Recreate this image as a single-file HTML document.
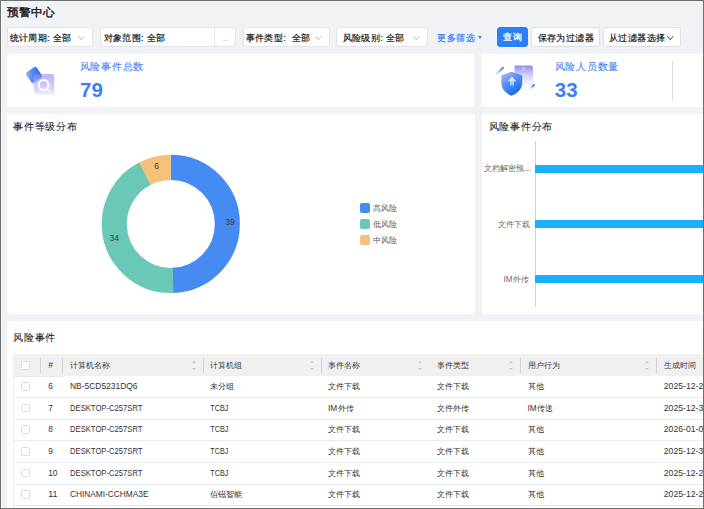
<!DOCTYPE html>
<html><head><meta charset="utf-8"><style>
*{box-sizing:border-box;margin:0;padding:0}
html,body{width:704px;height:509px;overflow:hidden;background:#f0f2f6}
body{font-family:"Liberation Sans",sans-serif;color:#333;position:relative}
.frame{position:absolute;left:0;top:0;width:704px;height:509px;border:1px solid #707070;z-index:50;box-shadow:inset 1px 0 0 #f8f9fc}
.a{position:absolute;white-space:nowrap}
.title{font-size:12px;font-weight:400;-webkit-text-stroke:0.45px #1f1f1f;color:#1f1f1f;line-height:14px;transform:scaleY(0.94);transform-origin:0 0}
.box{position:absolute;background:#fff;border:1px solid #e0e3e9;border-radius:3px}
.ft{position:absolute;font-size:9px;line-height:12px;color:#1a1a1a;letter-spacing:0.35px;-webkit-text-stroke:0.2px currentColor}
.chev{position:absolute;width:4.6px;height:4.6px;border-right:1px solid #c2c5cc;border-bottom:1px solid #c2c5cc;transform:rotate(45deg)}
.card{position:absolute;background:#fff;border-radius:3px}
.stitle{font-size:10px;color:#4d85f6;line-height:13px;letter-spacing:0.75px;-webkit-text-stroke:0.12px currentColor}
.num{font-size:20.5px;font-weight:bold;color:#3e7ff6;line-height:20px}
.ctitle{font-size:10px;color:#1c1c1c;line-height:13px;letter-spacing:0.75px;-webkit-text-stroke:0.1px currentColor}
.leg{position:absolute;left:359.6px;width:10.2px;height:9.6px;border-radius:2px}
.legt{position:absolute;left:372.5px;font-size:8.3px;color:#5a5a5a;line-height:10px}
.blab{position:absolute;font-size:8.3px;color:#6a6a6a;line-height:10px}
.bar{position:absolute;left:535px;width:170px;height:8px;background:#19b1fb}
.cb{width:8.6px;height:8.6px;border:1px solid #d9dce3;border-radius:1.5px;background:#fff}
.sorti{width:4px;height:10px}
.sorti:before{content:"";position:absolute;left:0;top:0;border-left:2px solid transparent;border-right:2px solid transparent;border-bottom:2.2px solid #c3c6cc}
.sorti:after{content:"";position:absolute;left:0;top:7.5px;border-left:2px solid transparent;border-right:2px solid transparent;border-top:2.2px solid #c3c6cc}
</style></head><body>
<div class="frame"></div>
<div class="a title" style="left:7px;top:6.3px">预警中心</div>
<div class="box" style="left:7px;top:27px;width:86px;height:20px"></div>
<div class="a ft" style="left:9.5px;top:31.5px">统计周期: 全部</div>
<i class="chev" style="left:79.3px;top:33.8px"></i>
<div class="box" style="left:100px;top:27px;width:136px;height:20px"></div>
<div class="a" style="left:214px;top:28px;width:1px;height:18px;background:#e3e6ec"></div>
<div class="a ft" style="left:103.5px;top:31.5px">对象范围: 全部</div>
<div class="a" style="left:221.5px;top:32.5px;font-size:8px;color:#a8a8a8;line-height:12px">...</div>
<div class="box" style="left:243px;top:27px;width:87px;height:20px"></div>
<div class="a ft" style="left:245.8px;top:31.5px">事件类型:&nbsp; 全部</div>
<i class="chev" style="left:316px;top:33.8px"></i>
<div class="box" style="left:336px;top:27px;width:92px;height:20px"></div>
<div class="a ft" style="left:342.8px;top:31.5px">风险级别: 全部</div>
<i class="chev" style="left:414px;top:33.8px"></i>
<div class="a ft" style="left:437.3px;top:31.5px;color:#3a7ef2;letter-spacing:0.6px">更多筛选</div>
<div class="a" style="left:477.5px;top:36px;width:0;height:0;border-left:2.2px solid transparent;border-right:2.2px solid transparent;border-top:3px solid #3a7ef2"></div>
<div class="box" style="left:497px;top:27px;width:31px;height:20px;background:#2a7ff6;border-color:#2a7ff6"></div>
<div class="a ft" style="left:503px;top:30.5px;color:#fff;letter-spacing:0.6px;-webkit-text-stroke:0.35px #fff">查询</div>
<div class="box" style="left:531px;top:27px;width:69px;height:20px;border-color:#dcdfe6"></div>
<div class="a ft" style="left:537.8px;top:31.5px">保存为过滤器</div>
<div class="box" style="left:603px;top:27px;width:78px;height:20px;border-color:#dcdfe6"></div>
<div class="a ft" style="left:608.8px;top:31.5px;letter-spacing:0.5px">从过滤器选择</div>
<i class="chev" style="left:667.5px;top:33.6px;border-color:#555"></i>
<div class="card" style="left:7px;top:54px;width:467px;height:53px"></div>
<div class="card" style="left:480.8px;top:54px;width:240px;height:53px"></div>
<svg class="a" style="left:0;top:0" width="704" height="120" viewBox="0 0 704 120">
  <defs>
    <linearGradient id="g1" x1="0" y1="0" x2="1" y2="0.6">
      <stop offset="0" stop-color="#a5b2f8"/><stop offset="0.55" stop-color="#4a86f7"/><stop offset="1" stop-color="#2a6cf5"/>
    </linearGradient>
    <linearGradient id="g2" x1="0" y1="0" x2="0" y2="1">
      <stop offset="0" stop-color="#8a8df3" stop-opacity="0.6"/><stop offset="1" stop-color="#e9ebfd" stop-opacity="0.95"/>
    </linearGradient>
    <linearGradient id="g3" x1="0" y1="0" x2="0.6" y2="1">
      <stop offset="0" stop-color="#c4b8f5"/><stop offset="0.45" stop-color="#5e92f7"/><stop offset="1" stop-color="#1468f3"/>
    </linearGradient>
    <linearGradient id="g4" x1="0" y1="0" x2="0" y2="1">
      <stop offset="0" stop-color="#8d89ef"/><stop offset="0.55" stop-color="#c8ccf7" stop-opacity="0.6"/><stop offset="1" stop-color="#eef0fd" stop-opacity="0"/>
    </linearGradient>
    <linearGradient id="g5" x1="1" y1="0" x2="0" y2="1">
      <stop offset="0" stop-color="#1f6ff5"/><stop offset="1" stop-color="#1f6ff5" stop-opacity="0"/>
    </linearGradient>
    <linearGradient id="g6" x1="0" y1="0" x2="0" y2="1">
      <stop offset="0" stop-color="#fff"/><stop offset="1" stop-color="#fff" stop-opacity="0.3"/>
    </linearGradient>
  </defs>
  <rect x="27.6" y="68.6" width="12.8" height="12.8" rx="2.2" fill="url(#g1)" transform="rotate(-33 34 75)"/>
  <rect x="33.8" y="74" width="20.5" height="20.6" rx="2.6" fill="url(#g2)"/>
  <circle cx="43.6" cy="85" r="4.9" fill="none" stroke="#fff" stroke-width="2"/>
  <line x1="47.6" y1="89.2" x2="51.2" y2="92.4" stroke="#fff" stroke-width="1.5" stroke-linecap="round" opacity="0.75"/>
  <path d="M514.5 65.5 h16.5 a2 2 0 0 1 2 2 v22 h-18.5 z" fill="url(#g4)"/>
  <circle cx="523.4" cy="69" r="2.3" fill="#c9c6f6" opacity="0.7"/><ellipse cx="523.6" cy="77" rx="4.2" ry="3.2" fill="#dcdcf8" opacity="0.6"/>
  <path d="M511.6 71.8 L522.2 75.3 L522.2 84 Q521 92 511.6 95.7 Q502 92 501.4 84 L501.4 75.3 Z" fill="url(#g3)"/>
  <path d="M512 76.8 L516.3 81.3 L514 81.3 L514 86 L510 86 L510 81.3 L507.7 81.3 Z" fill="url(#g6)"/>
  <line x1="495.3" y1="75" x2="503" y2="67.8" stroke="url(#g5)" stroke-width="1.8" stroke-linecap="round"/>
  <line x1="529.8" y1="89.2" x2="534" y2="85" stroke="url(#g5)" stroke-width="1.8" stroke-linecap="round"/>
</svg>
<div class="a stitle" style="left:79.5px;top:59.5px">风险事件总数</div>
<div class="a num" style="left:80px;top:80px">79</div>
<div class="a stitle" style="left:554.5px;top:59.5px">风险人员数量</div>
<div class="a num" style="left:554.8px;top:80px">33</div>
<div class="a" style="left:672.2px;top:61.4px;width:1px;height:39.2px;background:#dcdcdc"></div>
<div class="card" style="left:7px;top:114px;width:468px;height:199.5px"></div>
<div class="card" style="left:482px;top:114px;width:240px;height:199.5px"></div>
<div class="a ctitle" style="left:13.2px;top:120.3px">事件等级分布</div>
<div class="a ctitle" style="left:488.5px;top:120.3px">风险事件分布</div>
<svg class="a" style="left:0;top:0" width="704" height="320" viewBox="0 0 704 320"><g fill="none" stroke-width="25.099999999999994">
<circle cx="170.8" cy="223.9" r="56.55" stroke="#468bf2" stroke-dasharray="175.408 1000" transform="rotate(-90.000 170.8 223.9)"/>
<circle cx="170.8" cy="223.9" r="56.55" stroke="#69c8b6" stroke-dasharray="152.920 1000" transform="rotate(87.722 170.8 223.9)"/>
<circle cx="170.8" cy="223.9" r="56.55" stroke="#f4c07a" stroke-dasharray="26.986 1000" transform="rotate(242.658 170.8 223.9)"/>
</g>
<g font-size="8.5" fill="#3a3a3a" font-family="Liberation Sans">
<text x="225.3" y="225.2">39</text><text x="109.5" y="241.2">34</text><text x="154.3" y="169.3">6</text></g>
<rect x="535" y="141" width="1" height="166" fill="#d0d0d0"/>
</svg>
<div class="leg" style="top:203.3px;background:#468bf2"></div>
<div class="leg" style="top:219.1px;background:#69c8b6"></div>
<div class="leg" style="top:235px;background:#f4c07a"></div>
<div class="legt" style="top:203.2px">高风险</div>
<div class="legt" style="top:218.9px">低风险</div>
<div class="legt" style="top:234.8px">中风险</div>
<div class="bar" style="top:165px"></div>
<div class="bar" style="top:220.2px"></div>
<div class="bar" style="top:275px"></div>
<div class="blab" style="left:484px;top:163.2px">文档解密预...</div>
<div class="blab" style="left:497.8px;top:218.7px">文件下载</div>
<svg class="a" style="left:0;top:0" width="704" height="320" font-family="Liberation Sans"><text x="503.6" y="282" font-size="8.8" textLength="9" lengthAdjust="spacingAndGlyphs" fill="#6a6a6a">IM</text><text x="513" y="281.6" font-size="8.3" fill="#6a6a6a">外传</text></svg>
<div class="card" style="left:7px;top:321px;width:710px;height:200px"></div>
<div class="a ctitle" style="left:13px;top:331px">风险事件</div>
<div class="a" style="left:13px;top:353.8px;width:700px;height:22.0px;background:#f0f0f0"></div>
<div class="a" style="left:39.9px;top:358.2px;width:1px;height:14.4px;background:#d2d2d2"></div>
<div class="a" style="left:61.9px;top:358.2px;width:1px;height:14.4px;background:#d2d2d2"></div>
<div class="a" style="left:202.9px;top:358.2px;width:1px;height:14.4px;background:#d2d2d2"></div>
<div class="a" style="left:321.0px;top:358.2px;width:1px;height:14.4px;background:#d2d2d2"></div>
<div class="a" style="left:520.3px;top:358.2px;width:1px;height:14.4px;background:#d2d2d2"></div>
<div class="a" style="left:656.3px;top:358.2px;width:1px;height:14.4px;background:#d2d2d2"></div>
<div class="a sorti" style="left:192px;top:360.5px"></div>
<div class="a sorti" style="left:309.8px;top:360.5px"></div>
<div class="a sorti" style="left:418px;top:360.5px"></div>
<div class="a sorti" style="left:509px;top:360.5px"></div>
<div class="a sorti" style="left:645.3px;top:360.5px"></div>
<div class="a cb" style="left:21.2px;top:361.1px"></div>
<div class="a" style="left:13px;top:375.5px;width:50px;height:1px;background:#e4e9f2"></div>
<div class="a" style="left:13px;top:375.5px;width:1px;height:140px;background:#eef0f5"></div>
<div class="a" style="left:13px;top:396.8px;width:700px;height:1px;background:#e8ebf1"></div>
<div class="a cb" style="left:21.2px;top:382.25px"></div>
<div class="a" style="left:13px;top:418.5px;width:700px;height:1px;background:#e8ebf1"></div>
<div class="a cb" style="left:21.2px;top:403.84999999999997px"></div>
<div class="a" style="left:13px;top:440.0px;width:700px;height:1px;background:#e8ebf1"></div>
<div class="a cb" style="left:21.2px;top:425.45px"></div>
<div class="a" style="left:13px;top:461.8px;width:700px;height:1px;background:#e8ebf1"></div>
<div class="a cb" style="left:21.2px;top:447.09999999999997px"></div>
<div class="a" style="left:13px;top:483.5px;width:700px;height:1px;background:#e8ebf1"></div>
<div class="a cb" style="left:21.2px;top:468.84999999999997px"></div>
<div class="a" style="left:13px;top:504.7px;width:700px;height:1px;background:#e8ebf1"></div>
<div class="a cb" style="left:21.2px;top:490.3px"></div>
<svg class="a" style="left:0;top:0" width="704" height="509" font-family="Liberation Sans">
<text x="48.2" y="368.3" font-size="9.3" textLength="4.8" lengthAdjust="spacingAndGlyphs" fill="#3a3a3a">#</text>
<text x="70" y="368.3" font-size="8.3" fill="#3a3a3a">计算机名称</text>
<text x="210.3" y="368.3" font-size="8.3" fill="#3a3a3a">计算机组</text>
<text x="328" y="368.3" font-size="8.3" fill="#3a3a3a">事件名称</text>
<text x="437" y="368.3" font-size="8.3" fill="#3a3a3a">事件类型</text>
<text x="527.5" y="368.3" font-size="8.3" fill="#3a3a3a">用户行为</text>
<text x="663.8" y="368.3" font-size="8.3" fill="#3a3a3a">生成时间</text>
<text x="48.2" y="389.15000000000003" font-size="9.3" textLength="4.6" lengthAdjust="spacingAndGlyphs" fill="#333">6</text>
<text x="70" y="389.15000000000003" font-size="9.3" textLength="67.5" lengthAdjust="spacingAndGlyphs" fill="#333">NB-5CD5231DQ6</text>
<text x="210.3" y="389.15000000000003" font-size="8.3" fill="#333">未分组</text>
<text x="328" y="389.15000000000003" font-size="8.3" fill="#333">文件下载</text>
<text x="437" y="389.15000000000003" font-size="8.3" fill="#333">文件下载</text>
<text x="527.5" y="389.15000000000003" font-size="8.3" fill="#333">其他</text>
<text x="663.8" y="389.15000000000003" font-size="9.3" textLength="39.5" lengthAdjust="spacingAndGlyphs" fill="#333">2025-12-2</text>
<text x="48.2" y="410.75" font-size="9.3" textLength="4.6" lengthAdjust="spacingAndGlyphs" fill="#333">7</text>
<text x="70" y="410.75" font-size="9.3" textLength="72.5" lengthAdjust="spacingAndGlyphs" fill="#333">DESKTOP-C257SRT</text>
<text x="210.3" y="410.75" font-size="9.3" textLength="18" lengthAdjust="spacingAndGlyphs" fill="#333">TCBJ</text>
<text x="328" y="410.75" font-size="9.3" textLength="9.2" lengthAdjust="spacingAndGlyphs" fill="#333">IM</text><text x="337.5" y="410.75" font-size="8.3" fill="#333">外传</text>
<text x="437" y="410.75" font-size="8.3" fill="#333">文件外传</text>
<text x="527.5" y="410.75" font-size="9.3" textLength="9.2" lengthAdjust="spacingAndGlyphs" fill="#333">IM</text><text x="537.0" y="410.75" font-size="8.3" fill="#333">传送</text>
<text x="663.8" y="410.75" font-size="9.3" textLength="39.5" lengthAdjust="spacingAndGlyphs" fill="#333">2025-12-3</text>
<text x="48.2" y="432.35" font-size="9.3" textLength="4.6" lengthAdjust="spacingAndGlyphs" fill="#333">8</text>
<text x="70" y="432.35" font-size="9.3" textLength="72.5" lengthAdjust="spacingAndGlyphs" fill="#333">DESKTOP-C257SRT</text>
<text x="210.3" y="432.35" font-size="9.3" textLength="18" lengthAdjust="spacingAndGlyphs" fill="#333">TCBJ</text>
<text x="328" y="432.35" font-size="8.3" fill="#333">文件下载</text>
<text x="437" y="432.35" font-size="8.3" fill="#333">文件下载</text>
<text x="527.5" y="432.35" font-size="8.3" fill="#333">其他</text>
<text x="663.8" y="432.35" font-size="9.3" textLength="39.5" lengthAdjust="spacingAndGlyphs" fill="#333">2026-01-0</text>
<text x="48.2" y="454.0" font-size="9.3" textLength="4.6" lengthAdjust="spacingAndGlyphs" fill="#333">9</text>
<text x="70" y="454.0" font-size="9.3" textLength="72.5" lengthAdjust="spacingAndGlyphs" fill="#333">DESKTOP-C257SRT</text>
<text x="210.3" y="454.0" font-size="9.3" textLength="18" lengthAdjust="spacingAndGlyphs" fill="#333">TCBJ</text>
<text x="328" y="454.0" font-size="8.3" fill="#333">文件下载</text>
<text x="437" y="454.0" font-size="8.3" fill="#333">文件下载</text>
<text x="527.5" y="454.0" font-size="8.3" fill="#333">其他</text>
<text x="663.8" y="454.0" font-size="9.3" textLength="39.5" lengthAdjust="spacingAndGlyphs" fill="#333">2025-12-3</text>
<text x="48.2" y="475.75" font-size="9.3" textLength="9.2" lengthAdjust="spacingAndGlyphs" fill="#333">10</text>
<text x="70" y="475.75" font-size="9.3" textLength="72.5" lengthAdjust="spacingAndGlyphs" fill="#333">DESKTOP-C257SRT</text>
<text x="210.3" y="475.75" font-size="9.3" textLength="18" lengthAdjust="spacingAndGlyphs" fill="#333">TCBJ</text>
<text x="328" y="475.75" font-size="8.3" fill="#333">文件下载</text>
<text x="437" y="475.75" font-size="8.3" fill="#333">文件下载</text>
<text x="527.5" y="475.75" font-size="8.3" fill="#333">其他</text>
<text x="663.8" y="475.75" font-size="9.3" textLength="39.5" lengthAdjust="spacingAndGlyphs" fill="#333">2025-12-2</text>
<text x="48.2" y="497.20000000000005" font-size="9.3" textLength="9.2" lengthAdjust="spacingAndGlyphs" fill="#333">11</text>
<text x="70" y="497.20000000000005" font-size="9.3" textLength="78.5" lengthAdjust="spacingAndGlyphs" fill="#333">CHINAMI-CCHMA3E</text>
<text x="210.3" y="497.20000000000005" font-size="8.3" fill="#333">佰镃智能</text>
<text x="328" y="497.20000000000005" font-size="8.3" fill="#333">文件下载</text>
<text x="437" y="497.20000000000005" font-size="8.3" fill="#333">文件下载</text>
<text x="527.5" y="497.20000000000005" font-size="8.3" fill="#333">其他</text>
<text x="663.8" y="497.20000000000005" font-size="9.3" textLength="39.5" lengthAdjust="spacingAndGlyphs" fill="#333">2025-12-2</text>
</svg>
</body></html>
